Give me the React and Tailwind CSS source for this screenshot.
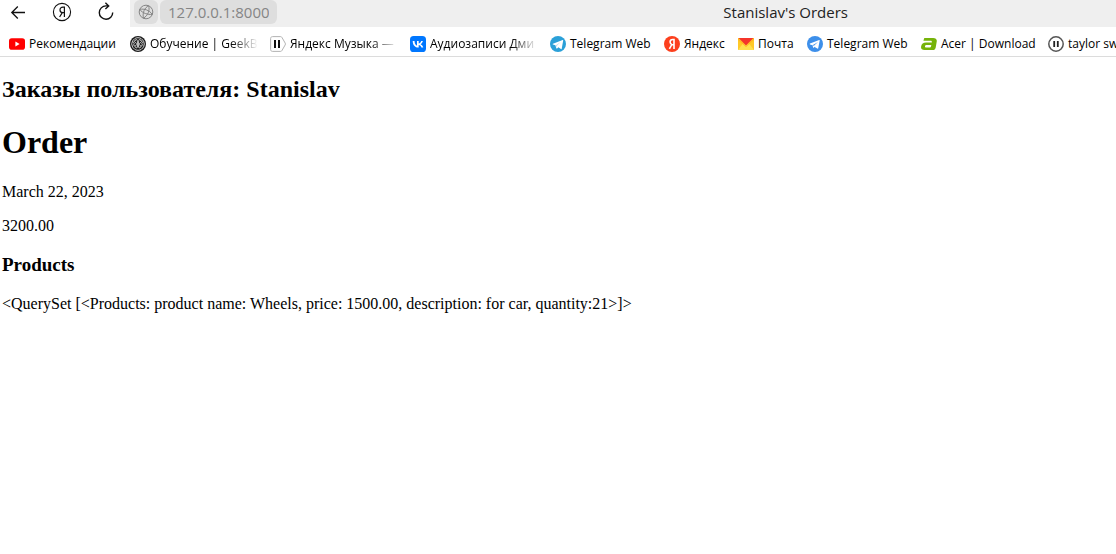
import React from "react";

function YouTubeIcon() {
  return (
    <svg viewBox="0 0 16 16" className="size-4 shrink-0" aria-hidden="true">
      <rect x="0" y="2.3" width="16" height="11.4" rx="2.8" fill="#f00" />
      <path d="M6.4 5.6 10.6 8l-4.2 2.4z" fill="#fff" />
    </svg>
  );
}

function GeekIcon() {
  return (
    <svg viewBox="0 0 16 16" className="size-4 shrink-0" aria-hidden="true">
      <circle cx="8" cy="8" r="8" fill="#1b1b1b" />
      <g fill="none" stroke="#fff" strokeWidth="0.8" strokeLinecap="round">
        <circle cx="8" cy="8" r="6.300" strokeDasharray="5.600 1" />
        <path d="M7.500 4.200c-.8-1.100-2.600-.6-2.500.8-1.400.1-1.900 1.800-.8 2.600-.9.900-.4 2.500.9 2.700 0 1.500 1.600 2.200 2.400 1.100M8.500 4.200c.8-1.100 2.600-.6 2.500.8 1.400.1 1.900 1.800.8 2.600.9.900.4 2.500-.9 2.700 0 1.500-1.600 2.200-2.400 1.100" />
        <path d="M7.400 5.500v5M8.600 5.500v5M5.400 6.500l1 1M10.600 6.500l-1 1M5.600 9.400l.9-.6M10.400 9.400l-.9-.6" />
      </g>
    </svg>
  );
}

function TagPauseIcon() {
  return (
    <svg viewBox="0 0 16 16" className="size-4 shrink-0" aria-hidden="true">
      <path d="M2.500.6h8.100c.6 0 1 .3 1.300.8l3.300 5.700c.3.600.3 1.200 0 1.800l-3.300 5.700c-.3.500-.7.800-1.300.8H2.500C1.400 15.400.6 14.600.6 13.500v-11C.6 1.400 1.400.6 2.500.6z" fill="#fff" stroke="#aaa" strokeWidth="0.9" />
      <path d="M4 4h2v8H4zM8 4h2v8H8z" fill="#111" />
    </svg>
  );
}

function VkIcon() {
  return (
    <svg viewBox="0 0 16 16" className="size-4 shrink-0" aria-hidden="true">
      <rect width="16" height="16" rx="3.6" fill="#07f" />
      <path d="M8.500 11.500C4.900 11.500 2.800 9 2.700 4.900h1.800c.1 3 1.400 4.300 2.500 4.600V4.900h1.700v2.600c1-.1 2.100-1.300 2.500-2.600h1.700c-.3 1.600-1.500 2.800-2.300 3.300.8.400 2.200 1.400 2.700 3.300h-1.900c-.4-1.300-1.400-2.200-2.700-2.400v2.400z" fill="#fff" />
    </svg>
  );
}

function TelegramIcon() {
  return (
    <svg viewBox="0 0 16 16" className="size-4 shrink-0" aria-hidden="true">
      <circle cx="8" cy="8" r="8" fill="#2ba0d8" />
      <path d="M12.600 3.900 3 7.700c-.6.200-.6.600 0 .8l2.400.8.900 2.900c.1.300.5.400.8.200l1.300-1.100 2.500 1.800c.4.200.7.100.8-.4l1.500-8.200c.1-.5-.2-.7-.6-.6z" fill="#fff" />
      <path d="M5.900 9.200l4.700-3.300-3.700 3.900-.2 1.700z" fill="#b9dced" />
    </svg>
  );
}

function TelegramBlueIcon() {
  return (
    <svg viewBox="0 0 16 16" className="size-4 shrink-0" aria-hidden="true">
      <circle cx="8" cy="8" r="8" fill="#3d8fea" />
      <path d="M12.200 4 3 7.600c-.5.200-.5.600 0 .8l2.500.8L11 5.900 6.900 9.800l-.1.800 3.500 2c.5.200.8.100.9-.4l1.500-7.700c.1-.4-.1-.6-.5-.5z" fill="#fff" />
      <path d="M5.500 9.200l.8 2.700 1.500-1.200-.9-.9z" fill="#fff" />
    </svg>
  );
}

function YandexIcon() {
  return (
    <svg viewBox="0 0 16 16" className="size-4 shrink-0" aria-hidden="true">
      <circle cx="8" cy="8" r="8" fill="#fc3f1d" />
      <path d="M10 12.900V3.500H8.700c-1.600 0-2.600 1-2.600 2.500 0 1.200.6 1.900 1.700 2.600L5.400 12.900M7.800 8.700H10" fill="none" stroke="#fff" strokeWidth="1.600" />
    </svg>
  );
}

function MailIcon() {
  return (
    <svg viewBox="0 0 16 16" className="size-4 shrink-0" aria-hidden="true">
      <path d="M0 2h16v12H0z" fill="#ffc928" />
      <path d="M0 14 5 7.500h6L16 14z" fill="#ffe04f" />
      <path d="M0 2l8 8 8-8v1.800L8 11 0 3.800z" fill="#ffb51f" />
      <path d="M.6 2h14.800L8 9.600z" fill="#f5342b" />
    </svg>
  );
}

function AcerIcon() {
  return (
    <svg viewBox="0 0 16 16" className="size-4 shrink-0" aria-hidden="true">
      <path
        d="M3.300 1.900h8.900c2.600 0 4 1.400 3.500 3.900l-1 5.600c-.3 1.700-1.300 2.600-3.100 2.600H3.500C1 14-.3 12.800.1 10.500.5 7.900 2.300 6.600 5 6.600h5.800c.2-1.300-.1-1.800-1.300-1.800H2.400zM5.800 9c-1.100 0-1.700.4-1.800 1.300-.1.800.3 1.200 1.200 1.200h3.300c.9 0 1.300-.3 1.500-1.100L10.300 9z"
        fill="#76b30a"
        fillRule="evenodd"
      />
    </svg>
  );
}

function RoundPauseIcon() {
  return (
    <svg viewBox="0 0 16 16" className="size-4 shrink-0" aria-hidden="true">
      <circle cx="8" cy="8" r="7.200" fill="#fff" stroke="#555" strokeWidth="1.500" />
      <path d="M5.300 5h1.800v6H5.300zM8.900 5h1.800v6H8.900z" fill="#222" />
    </svg>
  );
}

const bookmarks = [
  { label: "Рекомендации", Icon: YouTubeIcon, width: "w-[109px]" },
  { label: "Обучение | GeekB", Icon: GeekIcon, width: "w-32", fade: true },
  { label: "Яндекс Музыка —", Icon: TagPauseIcon, width: "w-32", fade: true },
  { label: "Аудиозаписи Дми", Icon: VkIcon, width: "w-32", fade: true },
  { label: "Telegram Web", Icon: TelegramIcon, width: "w-[102px]" },
  { label: "Яндекс", Icon: YandexIcon, width: "w-[62px]" },
  { label: "Почта", Icon: MailIcon, width: "w-[57px]" },
  { label: "Telegram Web", Icon: TelegramBlueIcon, width: "w-[102px]" },
  { label: "Acer | Download", Icon: AcerIcon, width: "w-[115px]" },
  { label: "taylor sw", Icon: RoundPauseIcon, width: "w-32" },
];

function Toolbar() {
  return (
    <div className="flex h-[27px] items-center">
      <div className="flex h-full w-[130px] shrink-0 items-center gap-6 pb-1 pl-2">
        <button type="button" aria-label="Назад" className="flex size-5 items-center justify-center">
          <svg viewBox="0 0 20 20" className="size-5 shrink-0" fill="none" stroke="#111" strokeWidth="1.300">
            <path d="M17 10.500H3.800M9.800 4.500l-6 6 6 6" />
          </svg>
        </button>
        <button type="button" aria-label="Яндекс" className="flex size-5 items-center justify-center">
          <svg viewBox="0 0 20 20" className="size-5 shrink-0" fill="none" stroke="#111">
            <circle cx="10" cy="10" r="8.600" strokeWidth="1.100" />
            <path d="M12.400 15V5.200h-1.500c-1.800 0-2.900 1-2.900 2.700s1.100 2.700 2.900 2.700h1.500M10.300 10.600 7.600 15" strokeWidth="1.200" />
          </svg>
        </button>
        <button type="button" aria-label="Обновить" className="flex size-5 items-center justify-center">
          <svg viewBox="0 0 20 20" className="size-5 shrink-0" fill="none" stroke="#111" strokeWidth="1.400">
            <path d="M16.700 10.500a6.700 6.700 0 1 1-6.700-6.600h2.500M9.400.8l3.300 3.100-3.300 3.200" />
          </svg>
        </button>
      </div>
      <div className="flex h-full min-w-0 grow items-start justify-between bg-[#efefef] pl-1">
        <div className="flex gap-0.5">
          <button type="button" aria-label="Сведения о сайте" className="flex h-6 w-6 items-center justify-center rounded-md bg-[#dedede]">
            <svg viewBox="0 0 16 16" className="size-4" fill="none" stroke="#858585" strokeWidth="1">
              <circle cx="8" cy="8" r="6.800" />
              <path d="M10.600 1.800C6.600 3.600 4.300 8.600 5.400 14.200M10.600 1.800c1.500 4.400-.6 9.800-5.200 12.400M1.700 5.400C4.600 9.300 9.800 10.800 14.300 10.400M1.700 5.400c4.400-1 9.700.8 12.600 5" />
            </svg>
          </button>
          <input
            type="text"
            aria-label="Адрес"
            defaultValue="127.0.0.1:8000"
            className="h-6 w-[117px] rounded-md bg-[#dedede] px-2 text-[15px] text-[#858585] outline-none"
          />
        </div>
        <p className="pr-[268px] text-[15px] leading-6 whitespace-nowrap text-[#222]">Stanislav's Orders</p>
      </div>
    </div>
  );
}

function BookmarksBar() {
  return (
    <nav aria-label="Закладки" className="flex h-[30px] items-center gap-3 overflow-hidden border-b border-[#dcdcdc] pt-1 pl-[9px]">
      {bookmarks.map(({ label, Icon, width, fade }, index) => (
        <a key={index} href="#" className={`flex shrink-0 items-center gap-1 text-xs leading-5 text-black ${width}`}>
          <Icon />
          <span
            className={
              fade
                ? "min-w-0 grow overflow-hidden whitespace-nowrap [mask-image:linear-gradient(to_right,black_75%,transparent)]"
                : "whitespace-nowrap"
            }
          >
            {label}
          </span>
        </a>
      ))}
    </nav>
  );
}

export default function App() {
  return (
    <div className="min-h-screen bg-white">
      <header className="font-['Open_Sans','Noto_Sans',sans-serif]">
        <Toolbar />
        <BookmarksBar />
      </header>
      <main className="px-0.5 pt-[18px] font-['Liberation_Serif','Times_New_Roman',serif] text-base leading-[18px] text-black">
        <h2 className="text-2xl leading-7 font-bold">Заказы пользователя: Stanislav</h2>
        <h1 className="mt-5 text-[32px] leading-[38px] font-bold">Order</h1>
        <p className="mt-[22px]">March 22, 2023</p>
        <p className="mt-4">3200.00</p>
        <h3 className="mt-5 text-[19px] leading-5 font-bold">Products</h3>
        <p className="mt-5">{"<QuerySet [<Products: product name: Wheels, price: 1500.00, description: for car, quantity:21>]>"}</p>
      </main>
    </div>
  );
}
